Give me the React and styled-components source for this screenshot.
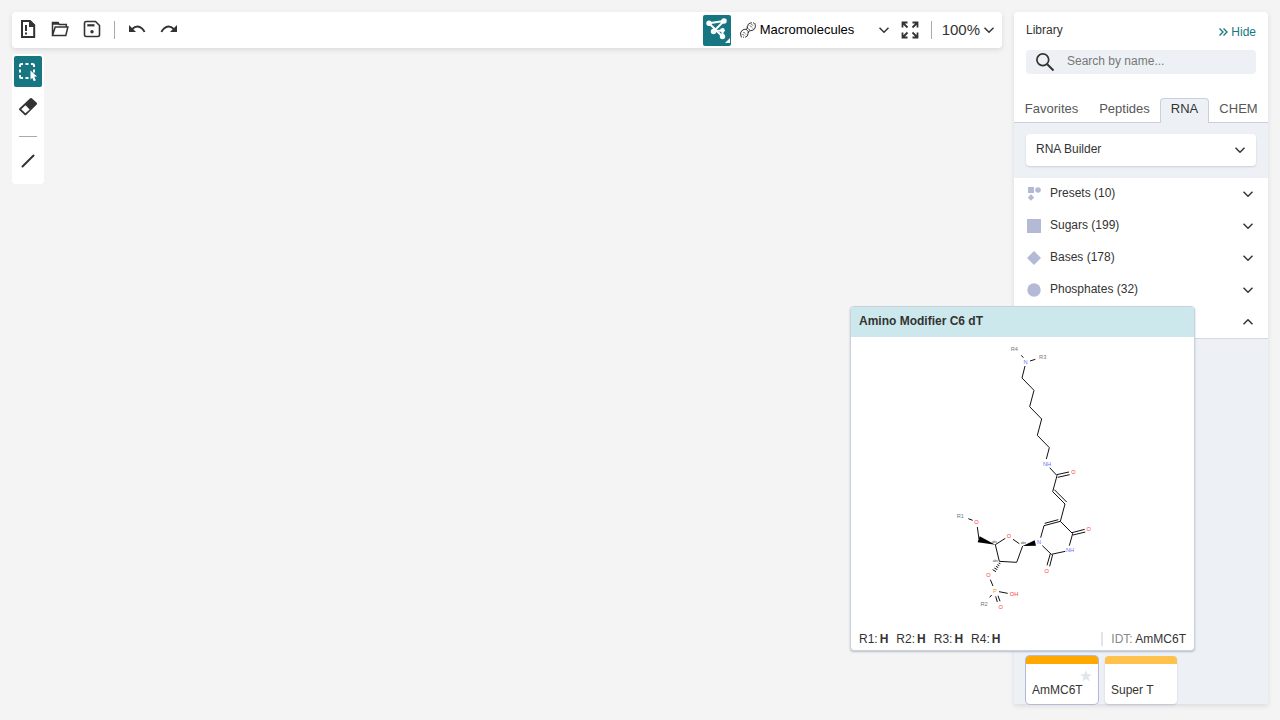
import React from "react";
import styled, { createGlobalStyle, css } from "styled-components";

const GlobalStyle = createGlobalStyle`
  *, *::before, *::after { box-sizing: border-box; }
  body {
    margin: 0;
    background: #f4f4f4;
    color: #333;
    font: 12px/16px "Liberation Sans", Arial, sans-serif;
  }
  button, input, select { font: inherit; color: inherit; }
  svg { display: block; flex: none; }
`;

const Page = styled.div`
  position: relative;
  display: flex;
  gap: 12px;
  height: 100vh;
  padding: 12px 12px 16px;
  overflow: hidden;
`;

const Workspace = styled.main`
  flex: 1;
  min-width: 0;
  display: flex;
  flex-direction: column;
  align-items: flex-start;
  gap: 6px;
`;

const PlainButton = styled.button.attrs({ type: "button" })`
  display: flex;
  align-items: center;
  justify-content: center;
  padding: 0;
  border: 0;
  background: none;
  cursor: pointer;
`;

const TopBar = styled.header`
  align-self: stretch;
  display: flex;
  align-items: center;
  height: 36px;
  padding: 0 8px 0 0;
  background: #fff;
  border-radius: 4px;
  box-shadow: 0 2px 5px rgba(103, 104, 132, 0.18);
`;

const BarButton = styled(PlainButton)`
  width: 32px;
  height: 32px;
`;

const FileButton = styled(BarButton)`
  padding-bottom: 2px;
`;

const BarDivider = styled.span`
  width: 1px;
  height: 18px;
  margin: 0 ${(p) => p.$after} 0 ${(p) => p.$before};
  background: #aaa;
`;

const Spacer = styled.span`
  flex: 1;
`;

const ToolButton = styled(PlainButton)`
  width: 28px;
  height: 31px;
  border-radius: 2px;
  ${(p) =>
    p.$active &&
    css`
      background: #167782;
      color: #fff;
    `}
`;

const SelectBox = styled.div`
  display: grid;
  grid-template-columns: 20px 1fr 10px;
  align-items: center;
  width: 158px;
  margin-right: 5px;
  padding-left: 9px;
`;

const ModeSelect = styled.select`
  appearance: none;
  border: 0;
  padding: 0;
  background: none;
  color: #000;
  font-size: 13px;
`;

const ZoomButton = styled(PlainButton)`
  gap: 4px;
  font-size: 15px;
`;

const SideTools = styled.nav`
  display: flex;
  flex-direction: column;
  align-items: center;
  width: 32px;
  height: 130px;
  padding-top: 2px;
  gap: 4px;
  background: #fff;
  border-radius: 4px;
`;

const ToolDivider = styled.span`
  width: 18px;
  height: 1px;
  margin: 10px 0 4px;
  background: #aaa;
`;

const Panel = styled.aside`
  display: flex;
  flex-direction: column;
  width: 254px;
  background: #edf1f5;
  border-radius: 4px 4px 0 0;
  box-shadow: 0 2px 5px rgba(103, 104, 132, 0.18);
`;

const PanelHead = styled.div`
  padding: 10px 12px 24px;
  background: #fff;
  border-radius: 4px 4px 0 0;
`;

const HeadRow = styled.div`
  display: flex;
  justify-content: space-between;
  height: 28px;
`;

const PanelTitle = styled.h2`
  margin: 0;
  font-size: 12px;
  line-height: 16px;
  font-weight: 400;
`;

const HideButton = styled(PlainButton)`
  gap: 3px;
  height: 20px;
  color: #167782;
`;

const SearchBox = styled.label`
  display: flex;
  align-items: center;
  gap: 12px;
  height: 24px;
  padding: 0 9px;
  background: #edf1f5;
  border-radius: 4px;
`;

const SearchInput = styled.input`
  flex: 1;
  min-width: 0;
  height: 22px;
  padding: 0 0 2px;
  border: 0;
  background: none;
  &::placeholder { color: #777; opacity: 1; }
`;

const Tabs = styled.div`
  display: grid;
  grid-template-columns: 75px 71px 49px 59px;
  height: 25px;
  background: #fff;
`;

const Tab = styled(PlainButton)`
  font-size: 13px;
  line-height: 16px;
  padding-bottom: 2px;
  color: #585858;
  border-bottom: 1px solid #c8cfde;
  ${(p) =>
    p.$active &&
    css`
      color: #333;
      background: #edf1f5;
      border: 1px solid #c8cfde;
      border-bottom: 0;
      border-radius: 4px 4px 0 0;
      padding-bottom: 4px;
    `}
`;

const BuilderButton = styled(PlainButton)`
  justify-content: space-between;
  height: 32px;
  margin: 11px 12px 12px;
  padding: 0 11px 0 10px;
  background: #fff;
  border-radius: 4px;
  box-shadow: 0 1px 2px rgba(103, 104, 132, 0.25);
`;

const BuilderName = styled.span`
  height: 18px;
`;

const Groups = styled.div`
  background: #fff;
  border-bottom: 1px solid #d3d8e2;
`;

const GroupButton = styled(PlainButton)`
  width: 100%;
  height: 32px;
  padding: 0 15px 0 13px;
  gap: 9px;
`;

const GroupName = styled.span`
  flex: 1;
  height: 18px;
  text-align: left;
`;

const Cards = styled.div`
  flex: 1;
  display: flex;
  align-items: flex-end;
  gap: 7px;
  padding: 0 12px;
`;

const Card = styled(PlainButton)`
  flex-direction: column;
  align-items: stretch;
  justify-content: space-between;
  width: 72px;
  height: 48px;
  padding: 0 6px 6px;
  border-top: 8px solid ${(p) => (p.$active ? "#ffa800" : "#ffc34d")};
  border-radius: 4px;
  background: #fff;
  text-align: left;
  box-shadow: ${(p) => (p.$active ? "0 0 0 1px #b4b9d6" : "0 1px 2px rgba(103, 104, 132, 0.25)")};
`;

const StarSlot = styled.span`
  display: flex;
  justify-content: flex-end;
  height: 18px;
  padding-top: 6px;
`;

const Preview = styled.section`
  position: absolute;
  top: 306px;
  right: 85px;
  width: 345px;
  background: #fff;
  border: 1px solid #cad3dd;
  border-radius: 4px;
  box-shadow: 0 1px 2px rgba(103, 104, 132, 0.4);
  overflow: hidden;
`;

const PreviewTitle = styled.h3`
  margin: 0;
  padding: 6px 8px 8px;
  background: #cce8ec;
  font-size: 12px;
  line-height: 16px;
`;

const Drawing = styled.div`
  display: flex;
  justify-content: center;
  padding: 3px 0 11px;
`;

const PreviewFoot = styled.footer`
  display: flex;
  align-items: center;
  gap: 8px;
  padding: 0 8px 3px;
`;

const Leaving = styled.span`
  white-space: nowrap;
  b { margin-left: 2px; }
`;

const Idt = styled.span`
  margin-left: auto;
  padding-left: 8px;
  line-height: 14px;
  border-left: 2px solid #e1e5ea;
  span { color: #888; }
`;

function Chevron({ up }) {
  return (
    <svg width="10" height="6" viewBox="0 0 10 6" fill="none" stroke="currentColor" strokeWidth="1.5">
      <path d={up ? "M.5 5.3 5 .8l4.5 4.5" : "M.5.7 5 5.2 9.5.7"} />
    </svg>
  );
}

function NewIcon() {
  return (
    <svg width="18" height="20" viewBox="0 0 18 20">
      <path d="M3 2h8l4.200 4.200V18H3z" fill="none" stroke="currentColor" strokeWidth="2" />
      <path d="M10 2v6h6V6l-4-4z" fill="currentColor" />
      <path d="M7 6v6M7 13.500v2" stroke="currentColor" strokeWidth="2" />
    </svg>
  );
}

function OpenIcon() {
  return (
    <svg width="18" height="16" viewBox="0 0 18 16" fill="none" stroke="currentColor" strokeWidth="1.500">
      <path d="M1.500 14.500V1.500H7l1.300 2h7V6M1.500 14.500 4.200 6h12.700l-2.100 8.500z" />
      <path d="M1 1h6l1.500 2.800H1z" fill="currentColor" stroke="none" />
    </svg>
  );
}

function SaveIcon() {
  return (
    <svg width="18" height="18" viewBox="0 0 18 18" fill="none" stroke="currentColor" strokeWidth="1.600">
      <path d="M3.200 1.500h9.300l4 4v9.300q0 1.700-1.700 1.700H3.200q-1.700 0-1.700-1.700V3.200q0-1.700 1.700-1.700z" />
      <path d="M4.300 5.300h7.200" strokeWidth="2.200" />
      <circle cx="9" cy="11.800" r="1.700" fill="currentColor" stroke="none" />
    </svg>
  );
}

function UndoIcon({ redo }) {
  return (
    <svg width="18" height="18" viewBox="0 0 18 18">
      <g transform={redo ? "translate(18 0) scale(-1 1)" : undefined}>
        <path d="M4 9.200q5-4.800 10-.8 1.900 1.500 2.500 3.700" fill="none" stroke="currentColor" strokeWidth="1.900" />
        <path d="M1 5v7h7z" fill="currentColor" />
      </g>
    </svg>
  );
}

function LayoutIcon() {
  return (
    <svg width="28" height="31" viewBox="0 0 28 31">
      <path d="M6 8.300 21 6 10.500 16.500l9-1.200v6.200z" fill="none" stroke="currentColor" strokeWidth="2" />
      <g fill="currentColor">
        <circle cx="6" cy="8.300" r="2.700" />
        <circle cx="21" cy="6" r="2.700" />
        <circle cx="10.500" cy="16.500" r="2.700" />
        <circle cx="19.500" cy="15.300" r="2.300" />
        <circle cx="19.500" cy="21.500" r="2.700" />
        <path d="M27 23v5h-5z" />
      </g>
    </svg>
  );
}

function HelixIcon() {
  return (
    <svg width="16" height="16" viewBox="0 0 16 16" fill="none" stroke="currentColor">
      <path d="M1 14.500Q-.5 10.500 2 8.500q2-1.500 4-1.300Q8 7 7.500 4.500 7.500 1.500 11 .8" />
      <path d="M5 15.300q3.200-.8 3-3.800-.5-2.700 2-2.700 3.500 0 5-2.500 1-2.500-.3-5.300" />
      <path d="M7 4.500q.5 2.500 3 3.500M6 7.500q2.500 1 2.500 3.500" strokeDasharray="2 1" />
      <path d="m10 3.500 3 3M11.500 2.200l1.300 1.300M3.500 10l2.500 2.500M2.500 12l1.500 1.500" strokeDasharray="2 1" />
      <path d="M1 14.800 4.500 15.300M11 .8l3.700.2" strokeDasharray="1 1" />
    </svg>
  );
}

function FullscreenIcon() {
  return (
    <svg width="18" height="18" viewBox="0 0 18 18" fill="none" stroke="currentColor" strokeWidth="1.800">
      <path d="M1.500 6.500v-5h5M11.500 1.500h5v5M16.500 11.500v5h-5M6.500 16.500h-5v-5M2 2l4.500 4.500M16 2l-4.500 4.500M16 16l-4.500-4.500M2 16l4.500-4.500" />
    </svg>
  );
}

function SelectIcon() {
  return (
    <svg width="20" height="20" viewBox="0 0 20 20">
      <path d="M2 5V3.500Q2 2 3.500 2H5M7.500 2h3M13 2h1.500Q16 2 16 3.500V5M16 7.500v3M2 7.500v3M2 13v1.500Q2 16 3.500 16H5M7.500 16h3" fill="none" stroke="currentColor" strokeWidth="2" />
      <path d="m12.500 8.500 6.500 6-2.700.3 1.500 3.500-2 .9-1.500-3.500-1.800 1.800z" fill="currentColor" />
    </svg>
  );
}

function EraserIcon() {
  return (
    <svg width="20" height="20" viewBox="0 0 20 20">
      <path d="M12.200 1.300q.8-.6 1.600 0l4.900 4.500q.7.800 0 1.600L8.200 18q-.8.700-1.600 0l-5.300-4.900q-.7-.8 0-1.600z" fill="currentColor" />
      <path d="m7.500 8.300 4.200 4.200L7.400 16.200 3.200 12.200z" fill="#fff" />
    </svg>
  );
}

function SearchIcon() {
  return (
    <svg width="20" height="20" viewBox="0 0 20 20" fill="none" stroke="currentColor" strokeWidth="1.700">
      <circle cx="7.800" cy="7.800" r="5.900" />
      <path d="m12.200 12.200 6.300 6.300" strokeWidth="2" />
    </svg>
  );
}

function GroupIcon({ kind }) {
  return (
    <svg width="14" height="16" viewBox="0 0 14 16" fill="#b4b9d6">
      {kind === "presets" && (
        <g>
          <rect x="1" y="1" width="6" height="6" />
          <circle cx="11" cy="4" r="2.800" />
          <path d="m4 8.300 3.200 3.200L4 14.700.8 11.500z" />
        </g>
      )}
      {kind === "sugars" && <rect x="0" y="1" width="14" height="14" />}
      {kind === "bases" && <path d="m7 1 7 7-7 7-7-7z" />}
      {kind === "phosphates" && <circle cx="7" cy="8" r="6.700" />}
    </svg>
  );
}

const bonds = [
  "M250 53l-6-7M270 63l16-5",
  "M255 78l-9 36 36 37-13 49 36 37-13 49 36 37-9 34",
  "M329 383l22 24-13 48 37 37-14 52 37 37-10 36",
  "M350 404l37-8M353 412l36-8M343 449l37 37",
  "M361 544l-49 13-10 36M355 539l-41 11",
  "M396 578l38-10M399 585l37-9",
  "M376 634l-42 9-27-26M331 641l-10 35M338 644l-9 35",
  "M238 611l-19-13M196 595l-30 19 12 50 52 3 18-49",
  "M117 598l-5-37M98 541l-13-5",
  "M151 719l8 19M177 755l26 5M155 765l-6 7",
  "M167 769l5 17M174 767l6 17",
  "M176 669l5 2M172 674l6 3M168 679l7 4M163 684l9 5M158 689l10 6",
];

const atoms = [
  ["R4", 223, 27, "#777"],
  ["R3", 308, 52, "#777"],
  ["N", 257, 67, "#6574f5"],
  ["NH", 321, 373, "#6574f5"],
  ["O", 400, 396, "#f33"],
  ["R1", 61, 528, "#777"],
  ["O", 109, 546, "#f33"],
  ["O", 207, 588, "#f33"],
  ["N", 297, 606, "#6574f5"],
  ["O", 446, 567, "#f33"],
  ["NH", 390, 630, "#6574f5"],
  ["O", 320, 693, "#f33"],
  ["O", 145, 706, "#f33"],
  ["P", 165, 754, "#e69a3c"],
  ["OH", 222, 763, "#f33"],
  ["R2", 132, 793, "#777"],
  ["O", 182, 801, "#f33"],
];

const stereo = [
  [163, 610],
  [250, 611],
  [166, 666],
];

function Molecule() {
  return (
    <svg width="170" height="280" viewBox="-6 0 510 840" role="img" aria-label="Amino Modifier C6 dT structure">
      <path d={bonds.join("")} fill="none" stroke="#111" strokeWidth="3" />
      <path d="M166 614l-53-7 6-18zM248 618l36-17 4 16z" fill="#000" />
      <g fontSize="17" textAnchor="middle">
        {atoms.map(([name, x, y, color]) => (
          <text key={`${x}-${y}`} x={x} y={y + 6} fill={color}>
            {name}
          </text>
        ))}
      </g>
      <g fontSize="10" textAnchor="middle" fill="#444">
        {stereo.map(([x, y]) => (
          <text key={x} x={x} y={y}>abs</text>
        ))}
      </g>
    </svg>
  );
}

const groups = [
  ["presets", "Presets (10)"],
  ["sugars", "Sugars (199)"],
  ["bases", "Bases (178)"],
  ["phosphates", "Phosphates (32)"],
];

const tabs = ["Favorites", "Peptides", "RNA", "CHEM"];

export default function App() {
  return (
    <>
      <GlobalStyle />
      <Page>
        <Workspace>
          <TopBar>
            <FileButton aria-label="New"><NewIcon /></FileButton>
            <FileButton aria-label="Open"><OpenIcon /></FileButton>
            <FileButton aria-label="Save"><SaveIcon /></FileButton>
            <BarDivider $before="6px" $after="6px" />
            <FileButton aria-label="Undo"><UndoIcon /></FileButton>
            <FileButton aria-label="Redo"><UndoIcon redo /></FileButton>
            <Spacer />
            <ToolButton $active aria-label="Layout"><LayoutIcon /></ToolButton>
            <SelectBox>
              <HelixIcon />
              <ModeSelect aria-label="Mode" defaultValue="macro">
                <option value="macro">Macromolecules</option>
              </ModeSelect>
              <Chevron />
            </SelectBox>
            <BarButton aria-label="Full screen"><FullscreenIcon /></BarButton>
            <BarDivider $before="5px" $after="10px" />
            <ZoomButton>100% <Chevron /></ZoomButton>
          </TopBar>
          <SideTools>
            <ToolButton $active aria-label="Select"><SelectIcon /></ToolButton>
            <ToolButton aria-label="Erase"><EraserIcon /></ToolButton>
            <ToolDivider />
            <ToolButton aria-label="Bond">
              <svg width="14" height="14" viewBox="0 0 14 14">
                <path d="M1.500 12.500l11-11" stroke="currentColor" strokeWidth="2" strokeLinecap="round" />
              </svg>
            </ToolButton>
          </SideTools>
        </Workspace>

        <Panel>
          <PanelHead>
            <HeadRow>
              <PanelTitle>Library</PanelTitle>
              <HideButton>
                <svg width="9" height="8" viewBox="0 0 9 8" fill="none" stroke="currentColor" strokeWidth="1.300">
                  <path d="M.5.500 4 4 .5 7.500M4.500.500 8 4 4.500 7.500" />
                </svg>
                Hide
              </HideButton>
            </HeadRow>
            <SearchBox>
              <SearchIcon />
              <SearchInput type="text" aria-label="Search" placeholder="Search by name..." />
            </SearchBox>
          </PanelHead>
          <Tabs role="tablist">
            {tabs.map((name) => (
              <Tab key={name} role="tab" aria-selected={name === "RNA"} $active={name === "RNA"}>
                {name}
              </Tab>
            ))}
          </Tabs>
          <BuilderButton>
            <BuilderName>RNA Builder</BuilderName>
            <Chevron />
          </BuilderButton>
          <Groups>
            {groups.map(([kind, name]) => (
              <GroupButton key={kind}>
                <GroupIcon kind={kind} />
                <GroupName>{name}</GroupName>
                <Chevron />
              </GroupButton>
            ))}
            <GroupButton aria-label="Nucleotides" aria-expanded="true">
              <GroupName />
              <Chevron up />
            </GroupButton>
          </Groups>
          <Cards>
            <Card $active>
              <StarSlot>
                <svg width="12" height="12" viewBox="0 0 12 12" fill="#e1e5ea">
                  <path d="m6 0 1.500 4.300H12L8.400 7l1.300 4.600L6 8.900l-3.700 2.700L3.600 7 0 4.300h4.500z" />
                </svg>
              </StarSlot>
              AmMC6T
            </Card>
            <Card><StarSlot />Super T</Card>
          </Cards>
        </Panel>

        <Preview>
          <PreviewTitle>Amino Modifier C6 dT</PreviewTitle>
          <Drawing><Molecule /></Drawing>
          <PreviewFoot>
            {["R1", "R2", "R3", "R4"].map((r) => (
              <Leaving key={r}>{r}:<b>H</b></Leaving>
            ))}
            <Idt><span>IDT:</span> AmMC6T</Idt>
          </PreviewFoot>
        </Preview>
      </Page>
    </>
  );
}
